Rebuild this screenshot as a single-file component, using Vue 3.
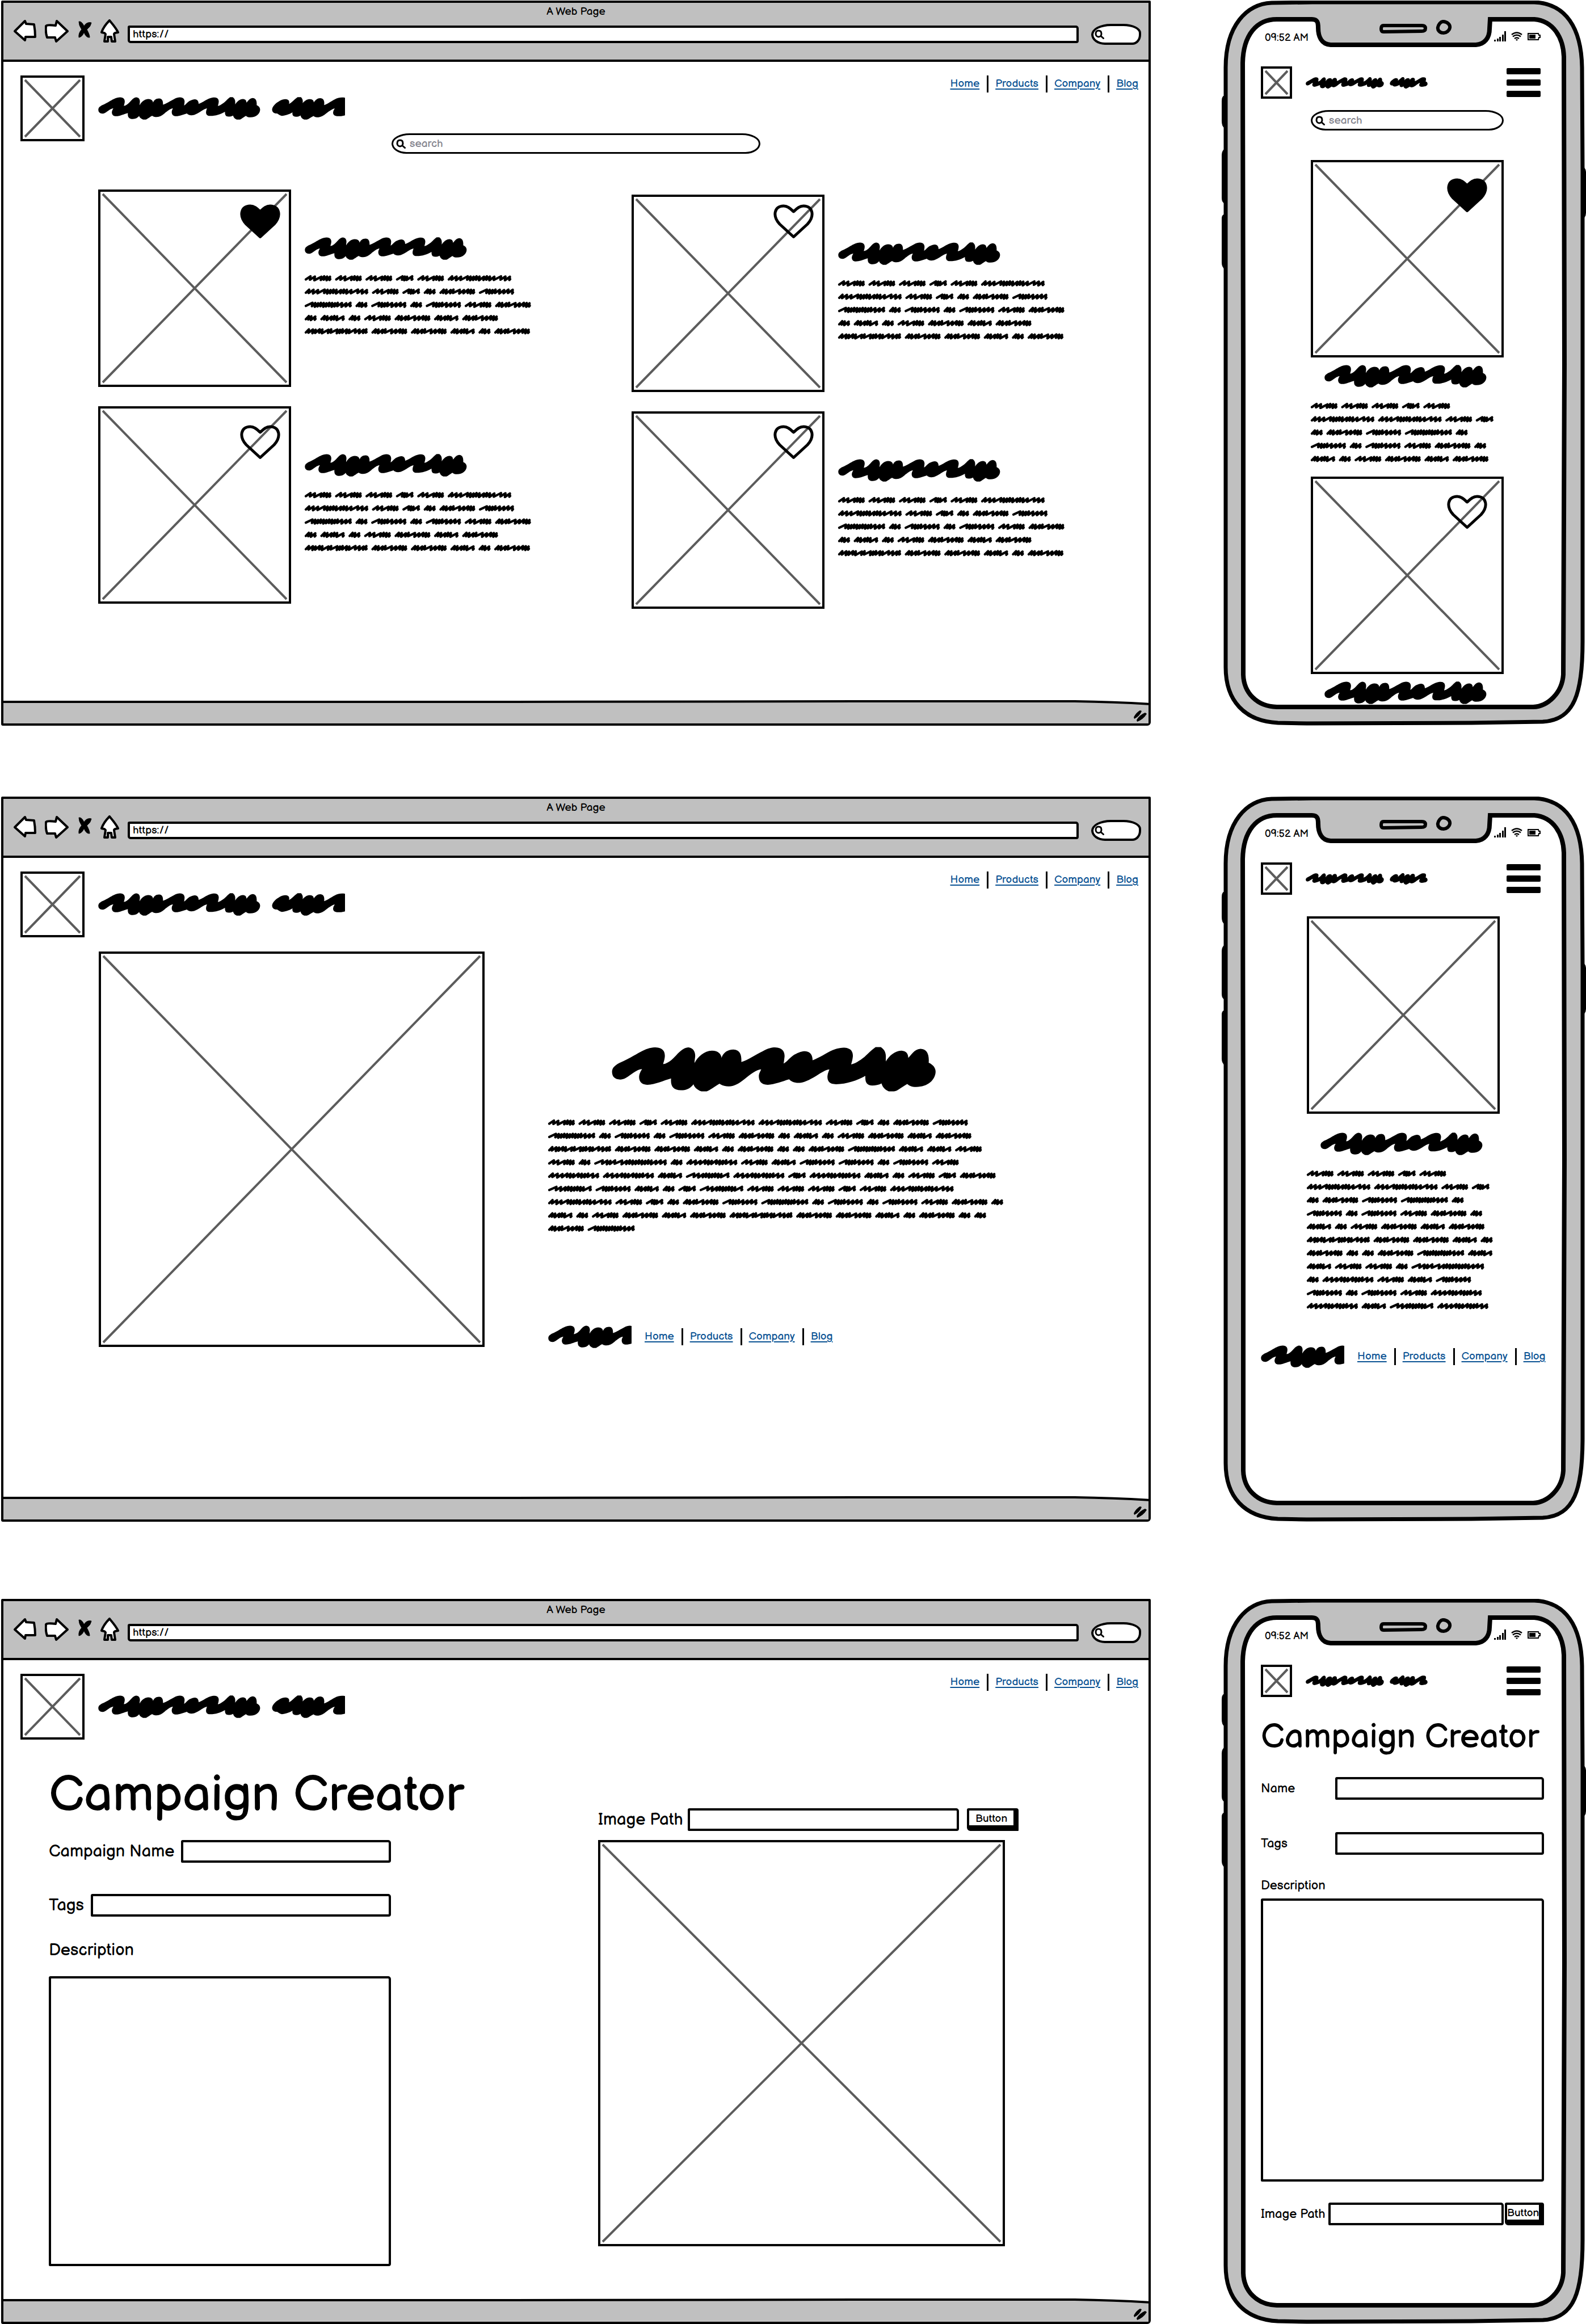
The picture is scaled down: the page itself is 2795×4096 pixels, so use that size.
<script setup>
import { h } from 'vue'

const screens = [
  { id: 'list', label: 'Campaign list' },
  { id: 'detail', label: 'Campaign detail' },
  { id: 'create', label: 'Campaign creator' },
]
const links = ['Home', 'Products', 'Company', 'Blog']
const cardColumns = [
  [{ id: 1, liked: true }, { id: 2, liked: false }],
  [{ id: 3, liked: false }, { id: 4, liked: false }],
]

// Scribbled words of the body copy: width, and the rhythm of the pen strokes
// (S = long sweep, s = normal stroke, d = dense stroke).
const words = {
  A: [47, 'ssSddd'],
  B: [31, 'SddS'],
  C: [112, 'dssSddddsddsSss'],
  D: [21, 'dds'],
  E: [63, 'ddsdSssdd'],
  F: [62, 'Sdddssss'],
  G: [83, 'Sdddddddddsss'],
  H: [43, 'ddsddS'],
  I: [111, 'dsdsdSdSddsdSssd'],
  J: [128, 'SsdsSsddddddddsss'],
  K: [90, 'dsssddsdddss'],
  L: [77, 'SssddddddS'],
}
const stepOf = { S: 9, s: 6, d: 4 }

const copy = {
  card: ['AAABAC', 'CABDEF', 'GDFDFAE', 'DHDAEHE', 'IEEHDE'],
  detail: [
    'AAABACCABDEF', 'GDFDFAEDHDAEHE', 'IEEHDEDDEGHHA', 'ADJDKAHFFDFA', 'KKHLKBKHDABE',
    'LFHDBLAAABAC', 'CABDEFGDFDFAED', 'HDAEHEIEEHDEDD', 'EG',
  ],
  phoneCard: ['AAABA', 'CCAB', 'DEFGD', 'FDFAED', 'HDAEHE'],
  phoneDetail: [
    'AAABA', 'CCAB', 'DEFGD', 'FDFAED', 'HDAEHE', 'IEEHD', 'EDDEGH', 'HAADJ', 'DKAHF', 'FDFAK', 'KHLK',
  ],
}

function linePath(line, top) {
  let x = 0
  let d = ''
  for (const key of line) {
    const [width, rhythm] = words[key]
    const total = [...rhythm].reduce((sum, c) => sum + stepOf[c], 0)
    const k = (width - 5) / total
    let px = x + 2
    d += `M${px.toFixed(1)} ${(top + 7.5).toFixed(1)}`
    ;[...rhythm].forEach((c, i) => {
      const step = stepOf[c] * k
      const peak = top + 2 + (i % 3) * 0.4
      const valley = top + 8 + ((i * 2) % 3) * 0.5
      d += `L${(px + step + 0.6).toFixed(1)} ${peak.toFixed(1)}`
      px += step
      d += `L${(px - 0.4).toFixed(1)} ${valley.toFixed(1)}`
    })
    d += `L${(x + width - 2).toFixed(1)} ${(top + 7).toFixed(1)}`
    x += width + 6.6
  }
  return d
}

const Blurb = (props) => {
  const height = Math.round((props.lines.length - 1) * 23.35 + 11)
  return h('svg', { viewBox: `0 0 340 ${height}`, width: 340, height, 'aria-hidden': 'true' }, [
    h('path', {
      d: props.lines.map((line, i) => linePath(line, i * 23.35)).join(''),
      fill: 'none', stroke: '#000', 'stroke-width': 4.2, 'stroke-linecap': 'round', 'stroke-linejoin': 'round',
    }),
  ])
}
Blurb.props = ['lines']

const longWord = 'M73 500C73 485 82 477 95 468C130 450 150 432 165 424C180 414 195 411 205 411C230 412 234 430 233 445C232 458 229 465 228 472C245 470 262 448 272 434C285 418 295 411 305 411C322 414 326 432 325 445C324 455 323 462 323 468C333 445 352 424 376 423C395 423 404 436 405 449C410 430 424 419 441 419C462 420 466 440 465 464C485 458 510 436 530 425C545 414 558 411 567 411C592 412 597 430 596 445C595 455 594 465 593 470C605 462 612 448 625 438C640 428 650 425 658 425C675 426 681 440 681 458C700 450 725 430 742 421C755 414 768 412 778 412C800 414 804 430 803 445C802 458 799 466 798 473C815 468 835 450 847 436C857 424 866 415 872 410L888 410C900 420 904 432 903 449V462C915 440 930 424 950 423C966 424 971 436 971 449C980 440 988 418 1008 416C1028 417 1035 436 1033 467C1046 474 1054 485 1054 500C1053 530 1030 555 995 555C982 555 973 550 968 544C950 556 938 570 928 571H912C900 565 893 555 890 542C882 547 872 550 862 550C845 549 840 538 841 515C815 532 785 545 752 545C732 545 726 534 726 518C727 505 730 498 732 491C715 493 695 515 675 526C660 536 648 540 638 540C625 540 615 534 610 527C590 534 565 546 545 547C525 547 518 534 518 515C519 503 523 498 525 491C510 492 492 510 475 526C458 542 445 552 427 553C415 553 405 549 399 543C385 552 370 567 360 571H344C330 565 322 555 320 545C312 558 300 567 282 567C258 566 250 552 252 524C230 531 205 546 180 547C162 547 155 535 155 518C156 505 160 498 164 490C148 490 130 512 115 522C108 527 102 528 98 528C82 528 73 518 73 500Z'
const shortWord = 'M1019 787C1020 765 1030 745 1042 731C1052 716 1062 711 1070 711C1082 713 1085 725 1083 746C1093 735 1102 715 1115 697H1128C1134 710 1136 720 1134 740C1142 722 1150 711 1162 711C1172 712 1176 722 1176 735C1182 718 1190 704 1200 704C1214 706 1217 725 1215 754C1230 745 1245 720 1262 706C1272 699 1280 699 1288 699C1300 702 1303 715 1302 730C1301 745 1299 752 1299 758C1310 766 1314 778 1314 795C1312 815 1302 826 1290 829C1283 833 1275 834 1268 834C1252 834 1248 820 1249 805C1250 790 1254 785 1255 779C1245 780 1230 805 1215 825C1205 838 1195 842 1188 842C1182 841 1178 838 1175 833C1165 842 1158 855 1150 858H1140C1132 852 1128 842 1126 828C1120 836 1114 838 1108 838C1098 836 1094 825 1096 806C1085 818 1070 831 1056 831C1048 830 1044 820 1038 814C1030 816 1020 810 1019 787Z'

const LongWord = () => h('svg', { viewBox: '72 409 984 163', preserveAspectRatio: 'none', 'aria-hidden': 'true' }, [h('path', { d: longWord })])
const ShortWord = () => h('svg', { viewBox: '1018 696 297 163', preserveAspectRatio: 'none', 'aria-hidden': 'true' }, [h('path', { d: shortWord })])

const ImageBox = () => h('svg', { viewBox: '0 0 100 100', preserveAspectRatio: 'none', role: 'img', 'aria-label': 'Image placeholder' }, [
  h('path', { d: 'M0 0L100 100M100 0L0 100', stroke: '#5c5c5c', 'stroke-width': 4, 'vector-effect': 'non-scaling-stroke' }),
])

const Heart = (props) => h('svg', { viewBox: '0 0 71 61', width: 71, height: 61, 'aria-hidden': 'true' }, [
  h('path', {
    d: 'M35.500 57.500L11 35C-2 21 1 3 18 3C26 3 31 9 35.500 13C40 9 45 3 53 3C70 3 73 21 60 35Z',
    fill: props.filled ? '#000' : 'none', stroke: '#000', 'stroke-width': 5, 'stroke-linejoin': 'round',
  }),
])
Heart.props = ['filled']

const Lens = () => h('svg', { viewBox: '0 0 17 17', width: 17, height: 17, 'aria-hidden': 'true' }, [
  h('path', { d: 'M7 2C10.500 2 12 4.500 12 7.500C12 10.500 10 13 7 13C4 13 2 10.500 2 7.500C2 4 4 2 7 2ZM11 11.500L15.500 15.500', fill: 'none', stroke: '#000', 'stroke-width': 3, 'stroke-linecap': 'round' }),
])
</script>

<template>
  <main class="board">
    <section v-for="s in screens" :key="s.id" class="row" :aria-label="s.label">
      <article class="window">
        <header class="chrome">
          <p class="title">A Web Page</p>
          <div class="toolbar">
            <button type="button" class="tool" aria-label="Back">
              <svg width="40" height="42" viewBox="0 0 40 42"><path d="M2 21L20 3L22 8L36 9Q38 20 38 31L21 31L20 37Z" /></svg>
            </button>
            <button type="button" class="tool" aria-label="Forward">
              <svg width="42" height="42" viewBox="0 0 42 42"><path d="M21 3L40 21L20 39L18 32H4Q1 24 2 12Q3 9 19 11Z" /></svg>
            </button>
            <button type="button" class="tool" aria-label="Stop">
              <svg width="26" height="42" viewBox="0 0 26 42"><path d="M3 4Q8 3 12 12Q17 4 25 6Q24 13 17 18Q22 27 22 32Q16 33 12 23Q9 31 3 32Q2 24 8 18Q3 11 3 4Z" class="solid" /></svg>
            </button>
            <button type="button" class="tool" aria-label="Home page">
              <svg width="33" height="42" viewBox="0 0 33 42"><path d="M16 2C21 8 28 16 31 23C28 24 25 23 24 26L26 39H20L19 31H13L13 39H7L9 26C7 23 4 24 2 23C5 14 10 8 16 2Z" /></svg>
            </button>
            <input class="url" type="text" value="https://" aria-label="Address">
            <label class="pill"><Lens /><input type="text" aria-label="Search the web"></label>
          </div>
        </header>

        <div class="page">
          <div class="site-head">
            <ImageBox class="box logo" />
            <div class="brand"><LongWord class="word" /><span class="clip short"><ShortWord class="word-short" /></span></div>
            <nav class="nav"><a v-for="l in links" :key="l" href="#">{{ l }}</a></nav>
          </div>

          <template v-if="s.id === 'list'">
            <label class="search wide"><Lens /><input type="search" placeholder="search" aria-label="Search campaigns"></label>
            <div class="cards">
              <div v-for="(col, i) in cardColumns" :key="i" class="column">
                <div v-for="card in col" :key="card.id" class="card">
                  <ImageBox class="box thumb" />
                  <button type="button" class="like" :aria-pressed="card.liked" aria-label="Like"><Heart :filled="card.liked" /></button>
                  <div class="card-text"><LongWord class="word" /><Blurb class="blurb" :lines="copy.card" /></div>
                </div>
              </div>
            </div>
          </template>

          <div v-else-if="s.id === 'detail'" class="detail">
            <ImageBox class="box hero" />
            <div class="detail-text">
              <LongWord class="word-big" />
              <Blurb class="blurb" :lines="copy.detail" />
              <div class="foot"><span class="clip"><LongWord class="word" /></span><nav class="nav"><a v-for="l in links" :key="l" href="#">{{ l }}</a></nav></div>
            </div>
          </div>

          <form v-else class="creator" @submit.prevent>
            <div class="fields">
              <h1>Campaign Creator</h1>
              <div class="field"><label for="w-name">Campaign Name</label><input id="w-name" class="sketch" type="text"></div>
              <div class="field"><label for="w-tags">Tags</label><input id="w-tags" class="sketch" type="text"></div>
              <label for="w-desc" class="desc-label">Description</label>
              <textarea id="w-desc" class="sketch area"></textarea>
            </div>
            <div class="upload">
              <div class="path-row">
                <label for="w-path">Image Path</label><input id="w-path" class="sketch" type="text">
                <button type="button" class="push">Button</button>
              </div>
              <ImageBox class="box preview" />
            </div>
          </form>
        </div>

        <svg class="status-strip" viewBox="0 0 2018 41" preserveAspectRatio="none" aria-hidden="true">
          <path d="M-4 3L900 3L1500 2L1888 2Q1960 3 2022 7V46H-4Z" fill="#c0c0c0" stroke="#000" stroke-width="4" vector-effect="non-scaling-stroke" />
        </svg>
        <svg class="grip" width="24" height="22" viewBox="0 0 24 22" aria-hidden="true">
          <path d="M12 1L15 2Q12 11 2 16L1 13Q5 5 12 1ZM21 5L24 7Q18 17 7 21L6 18Q11 9 21 5Z" />
        </svg>
      </article>

      <article class="phone">
        <svg class="shell" viewBox="0 0 642 1278" preserveAspectRatio="none" aria-hidden="true">
          <path d="M6 168H3Q0 170 0 178V212Q0 221 4 224H6ZM6 261Q0 264 0 272V348Q0 356 6 358ZM6 376Q0 377 0 384V462Q0 470 6 474ZM632 290Q642 294 642 302V374Q642 384 632 386Z" />
          <path d="M7 118C7 44 44 6 88 4L160 3H551C606 5 634 48 635 118L636 300V1130C636 1220 622 1268 566 1271L440 1273L150 1274L99 1273C40 1270 7 1234 7 1175Z" fill="#c0c0c0" stroke="#000" stroke-width="7" />
          <path d="M37 110C38 60 62 33 97 33H159C169 33 170 39 170 48C170 62 175 77 192 78L320 78H448C463 77 472 66 472 50L473 33H551C585 36 602 66 603 99L604 640L602 1188C600 1220 575 1244 549 1245H97C62 1244 39 1220 38 1188V640Z" fill="#fff" stroke="#000" stroke-width="8" />
          <path d="M285 44H353Q359 44 359 49Q359 54 352 54L285 55Q281 55 281 50Q281 44 285 44Z" fill="#c0c0c0" stroke="#000" stroke-width="6" />
          <path d="M390 37C398 37 403 43 402 48C401 53 396 57 391 57C384 57 380 52 381 47C382 42 386 37 390 37Z" fill="#c0c0c0" stroke="#000" stroke-width="6" />
        </svg>
        <div class="screen">
          <div class="status">
            <span>09:52 AM</span>
            <svg width="82" height="18" viewBox="0 0 82 18" aria-hidden="true">
              <path d="M0 15H3V18H0ZM5 13H8V18H5ZM9 10H12V18H9ZM14 6H17V18H14ZM18 0H21V18H18Z" />
              <path d="M31 6Q40 -1 49 6M33 9.500Q40 4 47 9.500M36 13Q40 10 44 13" fill="none" stroke="#000" stroke-width="2.500" />
              <path d="M38 15Q40 13 42 15L40 17Z" />
              <path d="M60 4H78L79 7H81V11H79L78 15H60Z" fill="none" stroke="#000" stroke-width="2" />
              <path d="M62 6H73V13H62Z" />
            </svg>
          </div>
          <div class="phone-head">
            <ImageBox class="box logo-small" />
            <div class="brand-small"><LongWord class="word-tiny" /><ShortWord class="short-tiny" /></div>
            <button type="button" class="menu" aria-label="Menu"><i></i><i></i><i></i></button>
          </div>

          <div v-if="s.id === 'list'" class="phone-list">
            <label class="search"><Lens /><input type="search" placeholder="search" aria-label="Search campaigns"></label>
            <div class="phone-card">
              <ImageBox class="box thumb" />
              <button type="button" class="like" aria-pressed="true" aria-label="Like"><Heart :filled="true" /></button>
              <LongWord class="word" />
              <Blurb class="blurb" :lines="copy.phoneCard" />
            </div>
            <div class="phone-card">
              <ImageBox class="box thumb" />
              <button type="button" class="like" aria-pressed="false" aria-label="Like"><Heart :filled="false" /></button>
              <LongWord class="word" />
            </div>
          </div>

          <template v-else-if="s.id === 'detail'">
            <div class="phone-detail">
              <ImageBox class="box thumb" />
              <LongWord class="word" />
              <Blurb class="blurb" :lines="copy.phoneDetail" />
            </div>
            <div class="foot phone-foot"><span class="clip"><LongWord class="word" /></span><nav class="nav"><a v-for="l in links" :key="l" href="#">{{ l }}</a></nav></div>
          </template>

          <form v-else class="phone-form" @submit.prevent>
            <h1>Campaign Creator</h1>
            <div class="field"><label for="p-name">Name</label><input id="p-name" class="sketch" type="text"></div>
            <div class="field"><label for="p-tags">Tags</label><input id="p-tags" class="sketch" type="text"></div>
            <label for="p-desc" class="desc-label">Description</label>
            <textarea id="p-desc" class="sketch area"></textarea>
            <div class="path-row">
              <label for="p-path">Image Path</label><input id="p-path" class="sketch" type="text">
              <button type="button" class="push">Button</button>
            </div>
          </form>
        </div>
      </article>
    </section>
  </main>
</template>

<style>
body {
  margin: 0;
  background: #fff;
}
</style>

<style scoped>
.board,
.board :is(*) {
  box-sizing: border-box;
}
.board {
  padding: 1px 3px 0 2px;
  color: #000;
  font-family: "Balsamiq Sans", "Liberation Sans", Arial, sans-serif;
  font-size: 19px;
}
.row {
  display: grid;
  grid-template-columns: minmax(0, 1fr) 636px;
  column-gap: 128px;
}
.row:nth-child(2) {
  margin-top: 125px;
}
.row:nth-child(3) {
  margin-top: 136px;
}
svg {
  display: block;
  flex: none;
}
p,
h1 {
  margin: 0;
  font-weight: 400;
}
input,
button,
textarea {
  margin: 0;
  padding: 0;
  border: 0;
  border-radius: 0;
  background: none;
  color: inherit;
  font: inherit;
  outline: none;
  appearance: none;
}

/* browser window */
.window {
  position: relative;
  display: flex;
  flex-direction: column;
  min-height: 1278px;
  border: 4px solid #000;
  border-radius: 2px 2px 6px 3px;
}
.chrome {
  height: 104px;
  padding-top: 5px;
  border-bottom: 4px solid #000;
  background: #c0c0c0;
}
.title {
  line-height: 22px;
  text-align: center;
}
.toolbar {
  display: flex;
  gap: 15px;
  height: 48px;
  padding: 2px 13px 0 18px;
}
.tool {
  height: 42px;
}
.tool path {
  fill: #fff;
  stroke: #000;
  stroke-width: 4px;
  stroke-linejoin: round;
}
.tool .solid {
  fill: #000;
  stroke-width: 1px;
}
.url {
  flex: 1;
  min-width: 0;
  height: 31px;
  margin-top: 11px;
  padding: 0 5px;
  border: 4px solid #000;
  border-radius: 3px 5px 4px 5px;
  background: #fff;
}
.pill {
  display: flex;
  align-items: center;
  width: 88px;
  height: 37px;
  margin: 8px 0 0 7px;
  padding-left: 2px;
  border: 4px solid #000;
  border-radius: 40% 36% 18% 28% / 52% 44% 48% 50%;
  background: #fff;
}
.pill input {
  width: 50px;
}
.page {
  flex: 1;
}
.status-strip {
  width: 100%;
  height: 41px;
}
.grip {
  position: absolute;
  right: 3px;
  bottom: 2px;
}
.site-head {
  display: flex;
  padding: 24px 18px 0 30px;
}
.box {
  padding: 4px;
  border: 4px solid #000;
  overflow: visible;
}
.logo {
  width: 113px;
  height: 116px;
}
.brand {
  display: flex;
  align-items: center;
  gap: 20px;
  margin-left: 24px;
}
.word {
  width: 286px;
  height: 40px;
}
.word-short {
  width: 139px;
  height: 40px;
}
.word-big {
  width: 572px;
  height: 79px;
}
.clip {
  flex: none;
  width: 147px;
  overflow: hidden;
}
.clip.short {
  width: 129px;
}
.nav {
  display: flex;
  height: 30px;
  line-height: 29px;
}
.site-head .nav {
  margin-left: auto;
}
.nav a {
  color: #0b5394;
  text-decoration-thickness: 2px;
  text-underline-offset: 3px;
}
.nav a + a {
  margin-left: 13px;
  padding-left: 12px;
  border-left: 3px solid #000;
}
.search {
  display: flex;
  align-items: center;
  gap: 7px;
  width: 340px;
  height: 36px;
  padding-left: 5px;
  border: 3px solid #000;
  border-radius: 32px 32px 26px 26px / 18px;
}
.search.wide {
  width: 650px;
  margin: -14px auto 0;
}
.search input {
  flex: 1;
  min-width: 0;
}
.search input::placeholder {
  color: #84848e;
  opacity: 1;
}
.blurb {
  overflow: visible;
}

/* campaign cards */
.cards {
  display: flex;
  align-items: flex-start;
  gap: 176px;
  padding: 63px 0 0 167px;
}
.column {
  --like-top: 26px;
  display: grid;
  gap: 34px;
  width: 764px;
}
.column + .column {
  --like-top: 17px;
  margin-top: 9px;
}
.card {
  position: relative;
  display: flex;
  gap: 24px;
}
.thumb {
  width: 340px;
  height: 348px;
}
.like {
  position: absolute;
  top: var(--like-top);
  left: 250px;
}
.card + .card .like {
  top: calc(var(--like-top) + 7px);
}
.card-text {
  display: grid;
  align-content: start;
  gap: 27px;
  padding-top: 84px;
}

/* campaign detail */
.detail {
  display: flex;
  gap: 112px;
  padding: 25px 0 0 168px;
}
.hero {
  width: 680px;
  height: 697px;
}
.detail-text {
  display: flex;
  flex-direction: column;
  width: 796px;
  padding-top: 168px;
}
.word-big {
  align-self: center;
  margin-bottom: 49px;
}
.foot {
  display: flex;
  align-items: center;
  gap: 23px;
  margin-top: 165px;
}

/* campaign creator */
.creator {
  display: flex;
  gap: 365px;
  padding-left: 80px;
  font-size: 29px;
}
.fields {
  width: 603px;
  padding-top: 54px;
}
.fields h1 {
  margin-bottom: 33px;
  font-size: 88px;
  line-height: 90px;
  white-space: nowrap;
}
.field {
  display: flex;
  align-items: center;
  gap: 12px;
}
.fields .field {
  margin-bottom: 55px;
}
.field .sketch,
.path-row .sketch {
  flex: 1;
  min-width: 0;
  height: 40px;
}
.sketch {
  border: 4px solid #000;
  border-radius: 3px 5px 4px 2px;
}
.area {
  display: block;
  width: 100%;
  resize: none;
}
.desc-label {
  display: block;
}
.fields .desc-label {
  margin: -15px 0 25px;
  line-height: 40px;
}
.fields .area {
  height: 511px;
}
.upload {
  width: 741px;
  padding-top: 121px;
}
.path-row {
  display: flex;
  align-items: center;
}
.path-row label {
  margin-right: 8px;
  white-space: nowrap;
}
.push {
  width: 91px;
  height: 40px;
  padding-top: 3px;
  border: solid #000;
  border-width: 4px 9px 10px 4px;
  border-radius: 3px 4px 1px 6px;
  font-size: 19px;
  line-height: 23px;
}
.upload .push {
  margin-left: 14px;
}
.preview {
  width: 717px;
  height: 716px;
  margin-top: 16px;
}

/* phone */
.phone {
  position: relative;
  min-height: 1278px;
}
.shell {
  position: absolute;
  top: 0;
  left: -3px;
  width: 642px;
  height: 100%;
}
.screen {
  position: relative;
  padding: 54px 71px 0 66px;
}
.status {
  display: flex;
  justify-content: space-between;
  height: 20px;
  padding: 0 6px 0 7px;
  font-size: 18px;
  line-height: 24px;
}
.phone-head {
  display: flex;
  align-items: center;
  margin-top: 42px;
  padding-right: 6px;
}
.logo-small {
  width: 55px;
  height: 57px;
}
.brand-small {
  display: flex;
  gap: 10px;
  margin-left: 24px;
}
.word-tiny {
  width: 138px;
  height: 20px;
}
.short-tiny {
  width: 67px;
  height: 20px;
}
.menu {
  display: grid;
  gap: 9px;
  width: 60px;
  margin-left: auto;
}
.menu i {
  height: 11px;
  border-radius: 2px;
  background: #000;
}
.phone-list {
  padding: 20px 0 0 88px;
}
.phone-list .search {
  margin-bottom: 52px;
}
.phone-card {
  position: relative;
  width: 340px;
}
.phone-card + .phone-card {
  margin-top: 26px;
}
.phone-card .like {
  top: 32px;
  left: 240px;
}
.phone-card .word {
  margin: 13px 0 27px 24px;
}
.phone-card:last-child .word {
  margin-bottom: 0;
}
.phone-detail {
  padding: 38px 0 0 81px;
}
.phone-detail .word {
  margin: 33px 0 27px 24px;
}
.phone-foot {
  margin-top: 63px;
}
.phone-form {
  padding-top: 42px;
  font-size: 22px;
}
.phone-form h1 {
  margin-bottom: 39px;
  font-size: 59px;
  line-height: 60px;
  white-space: nowrap;
}
.phone-form .field {
  gap: 0;
  margin-bottom: 57px;
}
.phone-form .field label {
  width: 131px;
}
.phone-form .desc-label {
  margin: -14px 0 10px;
  line-height: 24px;
}
.phone-form .area {
  height: 499px;
  margin-bottom: 37px;
}
.phone-form .path-row label {
  margin-right: 5px;
}
.phone-form .push {
  width: 69px;
  margin-left: 2px;
}
</style>
